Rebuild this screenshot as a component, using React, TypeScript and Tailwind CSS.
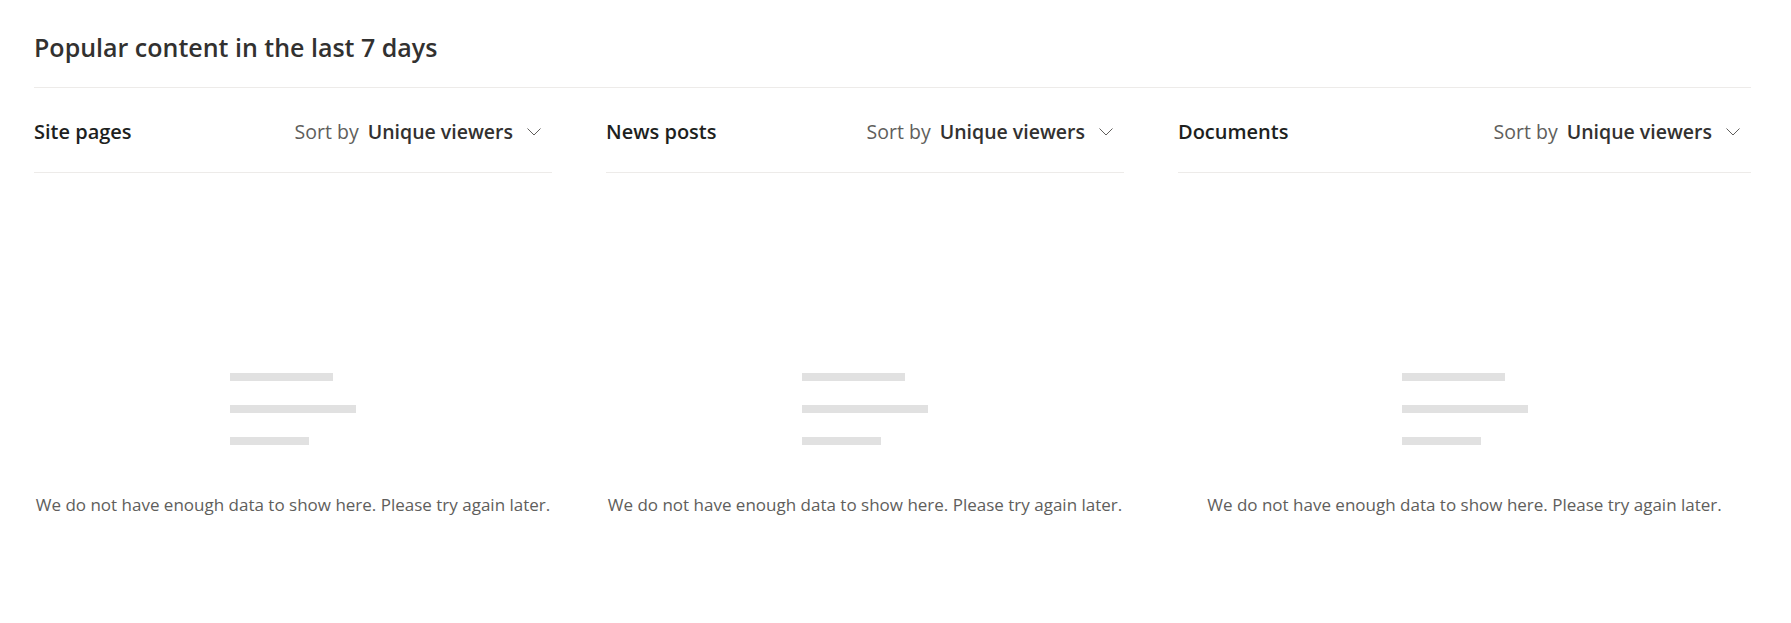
const columns = [
  { title: 'Site pages', width: 'w-[518px]' },
  { title: 'News posts', width: 'w-[518px]' },
  { title: 'Documents', width: 'flex-1' },
];

function Chevron() {
  return (
    <svg width="14" height="8" viewBox="0 0 14 8" fill="none" className="text-[#605e5c]">
      <path d="M0.5 0.5L7 7L13.5 0.5" stroke="currentColor" strokeWidth="1" />
    </svg>
  );
}

function Placeholder() {
  return (
    <div className="flex flex-col gap-[24px] w-[126px]">
      <div className="h-[8px] w-[103px] bg-[#e1e1e1]" />
      <div className="h-[8px] w-[126px] bg-[#e1e1e1]" />
      <div className="h-[8px] w-[79px] bg-[#e1e1e1]" />
    </div>
  );
}

function Column({ title, width }: { title: string; width: string }) {
  return (
    <div className={`${width} flex flex-col`}>
      <div className="h-[85px] flex items-center justify-between border-b border-[#edebe9] pr-[11px] pt-[3px]">
        <span className="text-[20px] font-semibold text-[#201f1e]">{title}</span>
        <div className="flex items-center">
          <span className="text-[19.5px] text-[#605e5c]">Sort by</span>
          <span className="ml-[9px] text-[19.5px] font-semibold text-[#323130]">Unique viewers</span>
          <span className="ml-[14px] flex items-center">
            <Chevron />
          </span>
        </div>
      </div>
      <div className="flex flex-col items-center pt-[200px]">
        <Placeholder />
        <p className="mt-[47px] text-[17px] text-[#605e5c] text-center whitespace-nowrap">
          We do not have enough data to show here. Please try again later.
        </p>
      </div>
    </div>
  );
}

export default function App() {
  return (
    <div className="w-[1791px] h-[623px] bg-white pl-[34px] pr-[40px] font-['Open_Sans',sans-serif]">
      <div className="h-[88px] flex items-end border-b border-[#edebe9] pb-[22px]">
        <h1 className="text-[25px] font-semibold text-[#323130] leading-[36px]">
          Popular content in the last 7 days
        </h1>
      </div>
      <div className="flex gap-[54px]">
        {columns.map((c) => (
          <Column key={c.title} title={c.title} width={c.width} />
        ))}
      </div>
    </div>
  );
}
